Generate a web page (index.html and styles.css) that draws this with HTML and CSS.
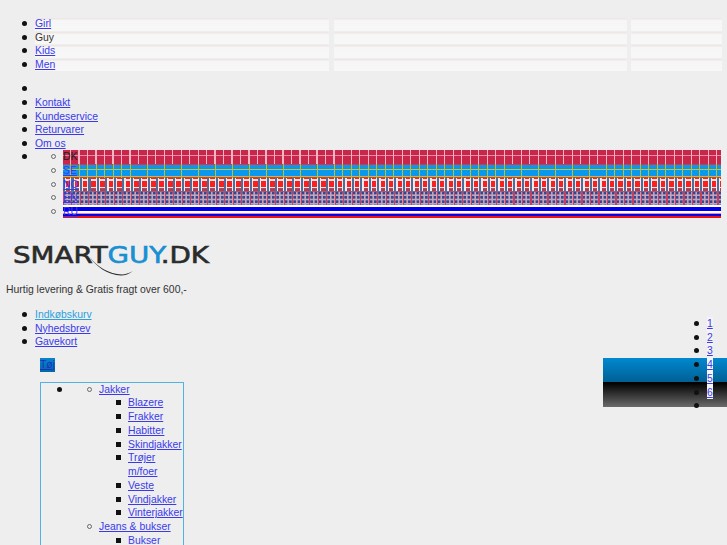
FILE: index.html
```html
<!DOCTYPE html>
<html lang="da">
<head>
<meta charset="UTF-8">
<meta name="viewport" content="width=device-width, initial-scale=1.0">
<title>Smartguy.dk</title>
<link rel="stylesheet" href="styles.css">
</head>
<body>
<ul class="gender-menu">
    <li><div class="bar-row"><span class="bar bar-first"><a href="#">Girl</a></span><span class="bar bar-mid"></span><span class="bar bar-small"></span></div></li>
    <li><div class="bar-row"><span class="bar bar-first">Guy</span><span class="bar bar-mid"></span><span class="bar bar-small"></span></div></li>
    <li><div class="bar-row"><span class="bar bar-first"><a href="#">Kids</a></span><span class="bar bar-mid"></span><span class="bar bar-small"></span></div></li>
    <li><div class="bar-row"><span class="bar bar-first"><a href="#">Men</a></span><span class="bar bar-mid"></span><span class="bar bar-small"></span></div></li>
</ul>

<ul class="top-menu">
    <li>&nbsp;</li>
    <li><a href="#">Kontakt</a></li>
    <li><a href="#">Kundeservice</a></li>
    <li><a href="#">Returvarer</a></li>
    <li><a href="#">Om os</a></li>
    <li>
        <ul class="languages">
            <li><a href="#" class="flag flag-dk">DK</a></li>
            <li><a href="#" class="flag flag-se">SE</a></li>
            <li><a href="#" class="flag flag-no">NO</a></li>
            <li><a href="#" class="flag flag-en">EN</a></li>
            <li><a href="#" class="flag flag-ru">RU</a></li>
        </ul>
    </li>
</ul>

<div class="logo">
    <svg width="220" height="46" viewBox="0 0 220 46">
        <text x="13" y="29" class="logo-text" textLength="196" lengthAdjust="spacingAndGlyphs">SMART<tspan class="logo-blue">GUY</tspan>.DK</text>
        <path d="M89 22 C97 33 109 40 122 40.500 C125 40.500 129 39 133 37 C129 40 125 41.500 121 41.500 C108 41 96 33 89 22 Z" class="logo-swoosh"/>
    </svg>
</div>
<p class="tagline">Hurtig levering &amp; Gratis fragt over 600,-</p>

<div class="main">
    <div class="left-col">
        <ul class="shop-links">
            <li><a href="#" class="active">Indkøbskurv</a></li>
            <li><a href="#">Nyhedsbrev</a></li>
            <li><a href="#">Gavekort</a></li>
        </ul>
        <a href="#" class="tab">Tøj</a>
        <div class="dropdown">
            <ul class="level1">
                <li>
                    <ul class="level2">
                        <li><a href="#">Jakker</a>
                            <ul class="level3">
                                <li><a href="#">Blazere</a></li>
                                <li><a href="#">Frakker</a></li>
                                <li><a href="#">Habitter</a></li>
                                <li><a href="#">Skindjakker</a></li>
                                <li><a href="#">Trøjer m/foer</a></li>
                                <li><a href="#">Veste</a></li>
                                <li><a href="#">Vindjakker</a></li>
                                <li><a href="#">Vinterjakker</a></li>
                            </ul>
                        </li>
                        <li><a href="#">Jeans &amp; bukser</a>
                            <ul class="level3">
                                <li><a href="#">Bukser</a></li>
                            </ul>
                        </li>
                    </ul>
                </li>
            </ul>
        </div>
    </div>
    <div class="slider">
        <div class="banner"></div>
        <ul class="pager">
            <li><a href="#">1</a></li>
            <li><a href="#">2</a></li>
            <li><a href="#">3</a></li>
            <li><a href="#">4</a></li>
            <li><a href="#">5</a></li>
            <li><a href="#">6</a></li>
            <li>&nbsp;</li>
        </ul>
    </div>
</div>
</body>
</html>
```

FILE: styles.css
```css
html, body {
    overflow: hidden;
}
body {
    margin: 0;
    height: 545px;
    background-color: #eeeeee;
    color: #333;
    font-family: 'Liberation Sans', Arial, sans-serif;
    font-size: 10.4px;
    line-height: 13.6px;
}
a {
    color: #3a3aec;
}
ul {
    margin: 0;
    padding: 0;
    list-style: none;
}

/* bullets, drawn bigger than the browser's own */
li::before {
    content: '';
    float: left;
    width: 5px;
    height: 5px;
    margin: 4px 0 0 -13px;
    border-radius: 50%;
    background-color: #111;
}
.languages li::before, .level2 > li::before {
    width: 3px;
    height: 3px;
    margin: 4px 0 0 -12px;
    border: 1px solid #666;
    background-color: transparent;
}
.level3 li::before {
    width: 5px;
    height: 5px;
    margin: 4px 0 0 -12px;
    border: none;
    border-radius: 0;
    background-color: #111;
}

/* top bars */
.gender-menu {
    padding: 17px 6px 0 35px;
}
.bar-row {
    display: flex;
}
.bar {
    display: block;
    height: 13.6px;
    background: linear-gradient(transparent 0 1px, #efe6e6 1px 2px, #f7f6f6 3px, #f8f7f7 100%);
    border-radius: 4px 4px 0 0;
}
.bar-first {
    flex: 0 0 294px;
}
.bar-mid {
    flex: 0 0 293px;
    margin-left: 5px;
}
.bar-small {
    flex: 0 0 91px;
    margin-left: 4px;
    border-radius: 4px 0 0 0;
}

.top-menu {
    padding: 11px 6px 0 35px;
}

/* language flags */
.languages {
    padding-left: 28px;
}
.flag {
    display: block;
    height: 13.6px;
    background-color: #c8264a;
}
.flag-dk {
    color: #222;
    text-decoration: none;
    background-image:
        repeating-linear-gradient(90deg, transparent 0 7px, #f0b6c4 7px 8.500px),
        linear-gradient(transparent 5px, #e48aa0 5px 6px, transparent 6px);
}
.flag-se {
    background-color: #0a97ee;
    background-image:
        repeating-linear-gradient(90deg, transparent 0 7.500px, #b8c22e 7.500px 8.500px),
        linear-gradient(#d43a4a 0 1px, transparent 1px 5px, #c4c42c 5px 6.500px, transparent 6.500px 12px, #b8c22e 12px 13px, #d43a4a 13px);
}
.flag-no {
    background-color: #fb2020;
    background-image:
        repeating-linear-gradient(90deg, #4a6f9c 0 2px, #f4e8e8 2px 3px, transparent 3px 7.500px, #f4e8e8 7.500px 8.500px),
        linear-gradient(#fb2020 0 1px, #f4e8e8 1px 2.500px, #fb2020 2.500px 8.500px, #f4e8e8 8.500px 10px, #4a6f9c 10px 11px, #fb2020 11px 12.500px, #f4e8e8 12.500px);
}
.flag-en {
    background-color: #c4a4bc;
    background-image:
        repeating-linear-gradient(90deg, #c84060 0 1px, transparent 1px 8.500px),
        radial-gradient(circle, #34468c 0 1.200px, transparent 1.500px),
        linear-gradient(#5a78a8 0 1px, transparent 1px);
    background-size: auto, 4.250px 4.250px, auto;
}
.flag-ru {
    background: linear-gradient(#ffffff 0 2px, #0000ee 2px 5.500px, #ffffff 5.500px 8px, #f08a9a 8px 8.500px, #0000ee 8.500px 10.500px, #f01010 10.500px 13px, #c02040 13px);
}

/* logo */
.logo {
    height: 46px;
    margin-top: 16px;
}
.logo svg {
    display: block;
}
.logo-text {
    font-family: 'DejaVu Sans', sans-serif;
    font-size: 23px;
    fill: #2b2b2b;
    stroke: #2b2b2b;
    stroke-width: 0.6;
}
.logo-blue {
    fill: #1a8fd2;
    stroke: #1a8fd2;
}
.logo-swoosh {
    fill: #2b2b2b;
}
.tagline {
    margin: 3px 0 0 6px;
}

/* shop links and dropdown */
.main {
    display: flex;
    justify-content: space-between;
    margin-top: 11px;
}
.shop-links {
    padding-left: 35px;
}
.shop-links .active {
    color: #2c9fdc;
}
.tab {
    display: block;
    width: 15px;
    height: 14px;
    margin: 9px 0 0 40px;
    background: linear-gradient(#0a82cc, #0068a8);
    color: #1a2fc0;
}
.dropdown {
    width: 142px;
    height: 400px;
    margin: 10px 0 0 40px;
    border: 1px solid #52b2e6;
    line-height: 13.75px;
}
.level1 {
    padding-left: 29px;
}
.level2, .level3 {
    padding-left: 29px;
}

/* slider */
.slider {
    position: relative;
    width: 124px;
    padding-top: 50px;
}
.banner {
    height: 49px;
    background: linear-gradient(#0088d0 0, #005f92 50%, #000 50%, #6a6a6a 100%);
}
.pager {
    position: absolute;
    top: 9px;
    left: 104px;
    line-height: 13.75px;
}
.pager a {
    display: inline-block;
    background-color: #f4f4f4;
}
```
